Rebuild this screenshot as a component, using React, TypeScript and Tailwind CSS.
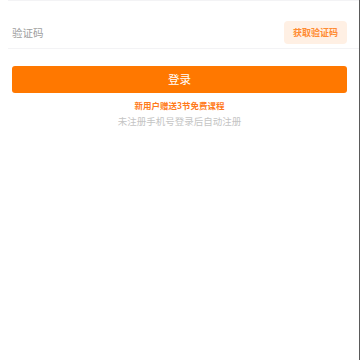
import React from "react";

export default function App() {
  return (
    <div
      className="w-[360px] h-[360px] bg-white border-r border-[#5a5a5a] overflow-hidden"
      style={{ fontFamily: '"Noto Sans CJK SC", "Noto Sans", sans-serif' }}
    >
      <div className="ml-2 h-[49px] border-t border-b border-[#f3f3f5] flex items-center justify-between pl-1 pr-3">
        <span className="text-[10.5px] text-[#a0a0a0] mt-[16px]">验证码</span>
        <button className="w-[63px] h-[23px] rounded-[4px] bg-[#fff0e4] text-[#ff8c33] text-[9px] font-bold flex items-center justify-center mt-[16px]">
          获取验证码
        </button>
      </div>
      <div className="px-3 mt-[17px]">
        <button className="w-full h-[27px] rounded-[3px] bg-[#ff7800] text-white text-[11.5px] flex items-center justify-center">
          登录
        </button>
      </div>
      <div className="mt-[6px] text-center text-[8.5px] font-bold text-[#ff7a1a] leading-[12px]">
        新用户赠送3节免费课程
      </div>
      <div className="mt-[3px] text-center text-[9.5px] text-[#c4c4c4] leading-[14px]">
        未注册手机号登录后自动注册
      </div>
    </div>
  );
}
